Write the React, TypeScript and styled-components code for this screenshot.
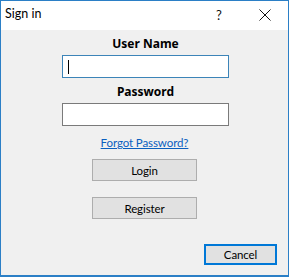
import React from "react";
import styled, { createGlobalStyle } from "styled-components";

const Global = createGlobalStyle`
  html, body { margin: 0; padding: 0; background: #ffffff; }
  body { font-family: Lato, "Noto Sans", sans-serif; }
  * { box-sizing: border-box; }
`;

const Window = styled.div`
  width: 289px;
  height: 277px;
  border: 1px solid #2b7fc6;
  border-bottom-width: 2px;
  display: flex;
  flex-direction: column;
  background: #f0f0f0;
`;

const TitleBar = styled.div`
  height: 29px;
  background: #ffffff;
  display: flex;
  align-items: center;
  padding-left: 4px;
  font-size: 12.5px;
  color: #000;
`;

const Title = styled.div`
  flex: 1;
  padding-bottom: 4px;
`;

const TitleButton = styled.div`
  width: 46px;
  height: 28px;
  display: flex;
  align-items: center;
  justify-content: center;
  font-size: 13px;
  color: #111;
  padding-bottom: 2px;
`;

const Body = styled.div`
  flex: 1;
  display: flex;
  flex-direction: column;
  align-items: center;
  padding-top: 6px;
`;

const Label = styled.div<{ $mt: number }>`
  margin-top: ${(p) => p.$mt}px;
  font-family: "Noto Sans", sans-serif;
  font-size: 12px;
  font-weight: bold;
  line-height: 16px;
  color: #000;
  margin-left: 2px;
`;

const Input = styled.div<{ $focused?: boolean }>`
  margin-top: 3px;
  width: 167px;
  height: 23px;
  margin-left: 1px;
  background: #ffffff;
  border: 1px solid ${(p) => (p.$focused ? "#3c84b8" : "#7a7a7a")};
  display: flex;
  align-items: center;
  padding-left: 5px;
`;

const Caret = styled.div`
  width: 1px;
  height: 14px;
  background: #000;
`;

const Link = styled.a`
  margin-top: 9px;
  font-size: 11.5px;
  letter-spacing: -0.1px;
  line-height: 16px;
  color: #0a5fbf;
  text-decoration: underline;
  cursor: pointer;
`;

const Button = styled.div<{ $mt: number }>`
  margin-top: ${(p) => p.$mt}px;
  width: 105px;
  height: 22px;
  background: #e1e1e1;
  border: 1px solid #adadad;
  display: flex;
  align-items: center;
  justify-content: center;
  font-size: 11.5px;
  letter-spacing: -0.1px;
  color: #000;
`;

const Footer = styled.div`
  align-self: stretch;
  display: flex;
  justify-content: flex-end;
  padding-right: 11px;
  margin-top: auto;
  margin-bottom: 10px;
`;

const DefaultButton = styled.div`
  width: 73px;
  height: 21px;
  background: #e1e1e1;
  border: 2px solid #0078d7;
  display: flex;
  align-items: center;
  justify-content: center;
  font-size: 11.5px;
  letter-spacing: -0.1px;
  color: #000;
`;

export default function App() {
  return (
    <>
      <Global />
      <Window>
        <TitleBar>
          <Title>Sign in</Title>
          <TitleButton>?</TitleButton>
          <TitleButton>
            <svg width="12" height="12" viewBox="0 0 12 12">
              <path d="M0.5 0.5 L11.5 11.5 M11.5 0.5 L0.5 11.5" stroke="#111" strokeWidth="1" />
            </svg>
          </TitleButton>
        </TitleBar>
        <Body>
          <Label $mt={0}>User Name</Label>
          <Input $focused>
            <Caret />
          </Input>
          <Label $mt={6}>Password</Label>
          <Input />
          <Link>Forgot Password?</Link>
          <Button $mt={8}>Login</Button>
          <Button $mt={16}>Register</Button>
          <Footer>
            <DefaultButton>Cancel</DefaultButton>
          </Footer>
        </Body>
      </Window>
    </>
  );
}
